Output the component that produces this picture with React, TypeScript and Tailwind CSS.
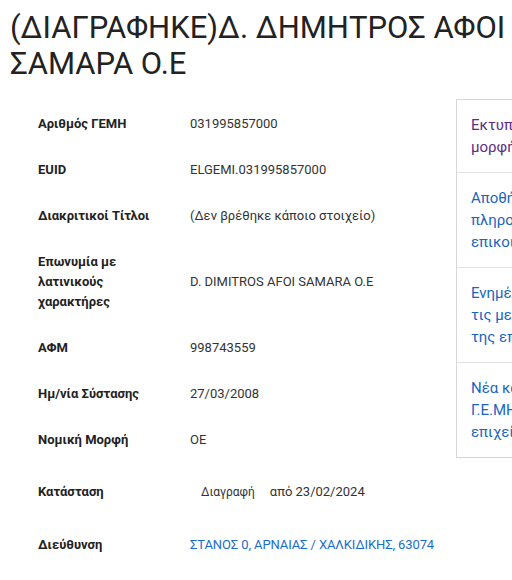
const rows: { label: string[]; value: string; h: string }[] = [
  { label: ['Αριθμός ΓΕΜΗ'], value: '031995857000', h: 'h-[46px]' },
  { label: ['EUID'], value: 'ELGEMI.031995857000', h: 'h-[46px]' },
  { label: ['Διακριτικοί Τίτλοι'], value: '(Δεν βρέθηκε κάποιο στοιχείο)', h: 'h-[46px]' },
  { label: ['Επωνυμία με', 'λατινικούς', 'χαρακτήρες'], value: 'D. DIMITROS AFOI SAMARA O.E', h: 'h-[86px]' },
  { label: ['ΑΦΜ'], value: '998743559', h: 'h-[46px]' },
  { label: ['Ημ/νία Σύστασης'], value: '27/03/2008', h: 'h-[46px]' },
  { label: ['Νομική Μορφή'], value: 'ΟΕ', h: 'h-[46px]' },
];

const links: { lines: string[]; visited?: boolean }[] = [
  { lines: ['Εκτυπώσιμη', 'μορφή'], visited: true },
  { lines: ['Αποθήκευση', 'πληροφοριών', 'επικοινωνίας'] },
  { lines: ['Ενημέρωση για', 'τις μεταβολές', 'της επιχείρησης'] },
  { lines: ['Νέα καταχώριση', 'Γ.Ε.ΜΗ.', 'επιχείρησης'] },
];

export default function App() {
  return (
    <div className="w-[512px] h-[580px] overflow-hidden bg-white font-['Roboto',sans-serif] text-[#222]">
      {/* Title */}
      <h1 className="pl-[10px] pt-[10px] text-[31px] leading-[36px] font-normal whitespace-nowrap">
        (ΔΙΑΓΡΑΦΗΚΕ)Δ. ΔΗΜΗΤΡΟΣ ΑΦΟΙ
        <br />
        ΣΑΜΑΡΑ Ο.Ε
      </h1>

      <div className="flex mt-[19px]">
        {/* Details */}
        <div className="w-[456px] shrink-0 pl-[38px]">
          {rows.map((r) => (
            <div key={r.value} className={`flex items-center ${r.h}`}>
              <div className="w-[152px] shrink-0 text-[13px] leading-[20px] font-bold">
                {r.label.map((l) => (
                  <div key={l}>{l}</div>
                ))}
              </div>
              <div className="text-[13px] leading-[20px] text-[#333]">{r.value}</div>
            </div>
          ))}

          <div className="flex items-center h-[58px]">
            <div className="w-[152px] shrink-0 text-[13px] leading-[20px] font-bold">Κατάσταση</div>
            <div className="flex items-center text-[13px] leading-[20px] text-[#333]">
              <span className="px-[11px] py-[6px] text-[12px]">Διαγραφή</span>
              <span className="ml-[4px]">από 23/02/2024</span>
            </div>
          </div>

          <div className="flex items-center h-[48px]">
            <div className="w-[152px] shrink-0 text-[13px] leading-[20px] font-bold">Διεύθυνση</div>
            <a className="text-[13px] leading-[20px] text-[#1a6dcc] whitespace-nowrap tracking-[-0.1px]">
              ΣΤΑΝΟΣ 0, ΑΡΝΑΙΑΣ / ΧΑΛΚΙΔΙΚΗΣ, 63074
            </a>
          </div>
        </div>

        {/* Side menu */}
        <div className="w-[200px] shrink-0 self-start border border-[#d6d6d6] -mt-[2px]">
          {links.map((l, i) => (
            <div
              key={i}
              className={`pl-[14px] py-[14px] text-[15px] leading-[22px] whitespace-nowrap ${
                i > 0 ? 'border-t border-[#e2e2e2]' : ''
              } ${l.visited ? 'text-[#5b2d86]' : 'text-[#1a65c0]'}`}
            >
              {l.lines.map((t) => (
                <div key={t}>{t}</div>
              ))}
            </div>
          ))}
        </div>
      </div>
    </div>
  );
}
